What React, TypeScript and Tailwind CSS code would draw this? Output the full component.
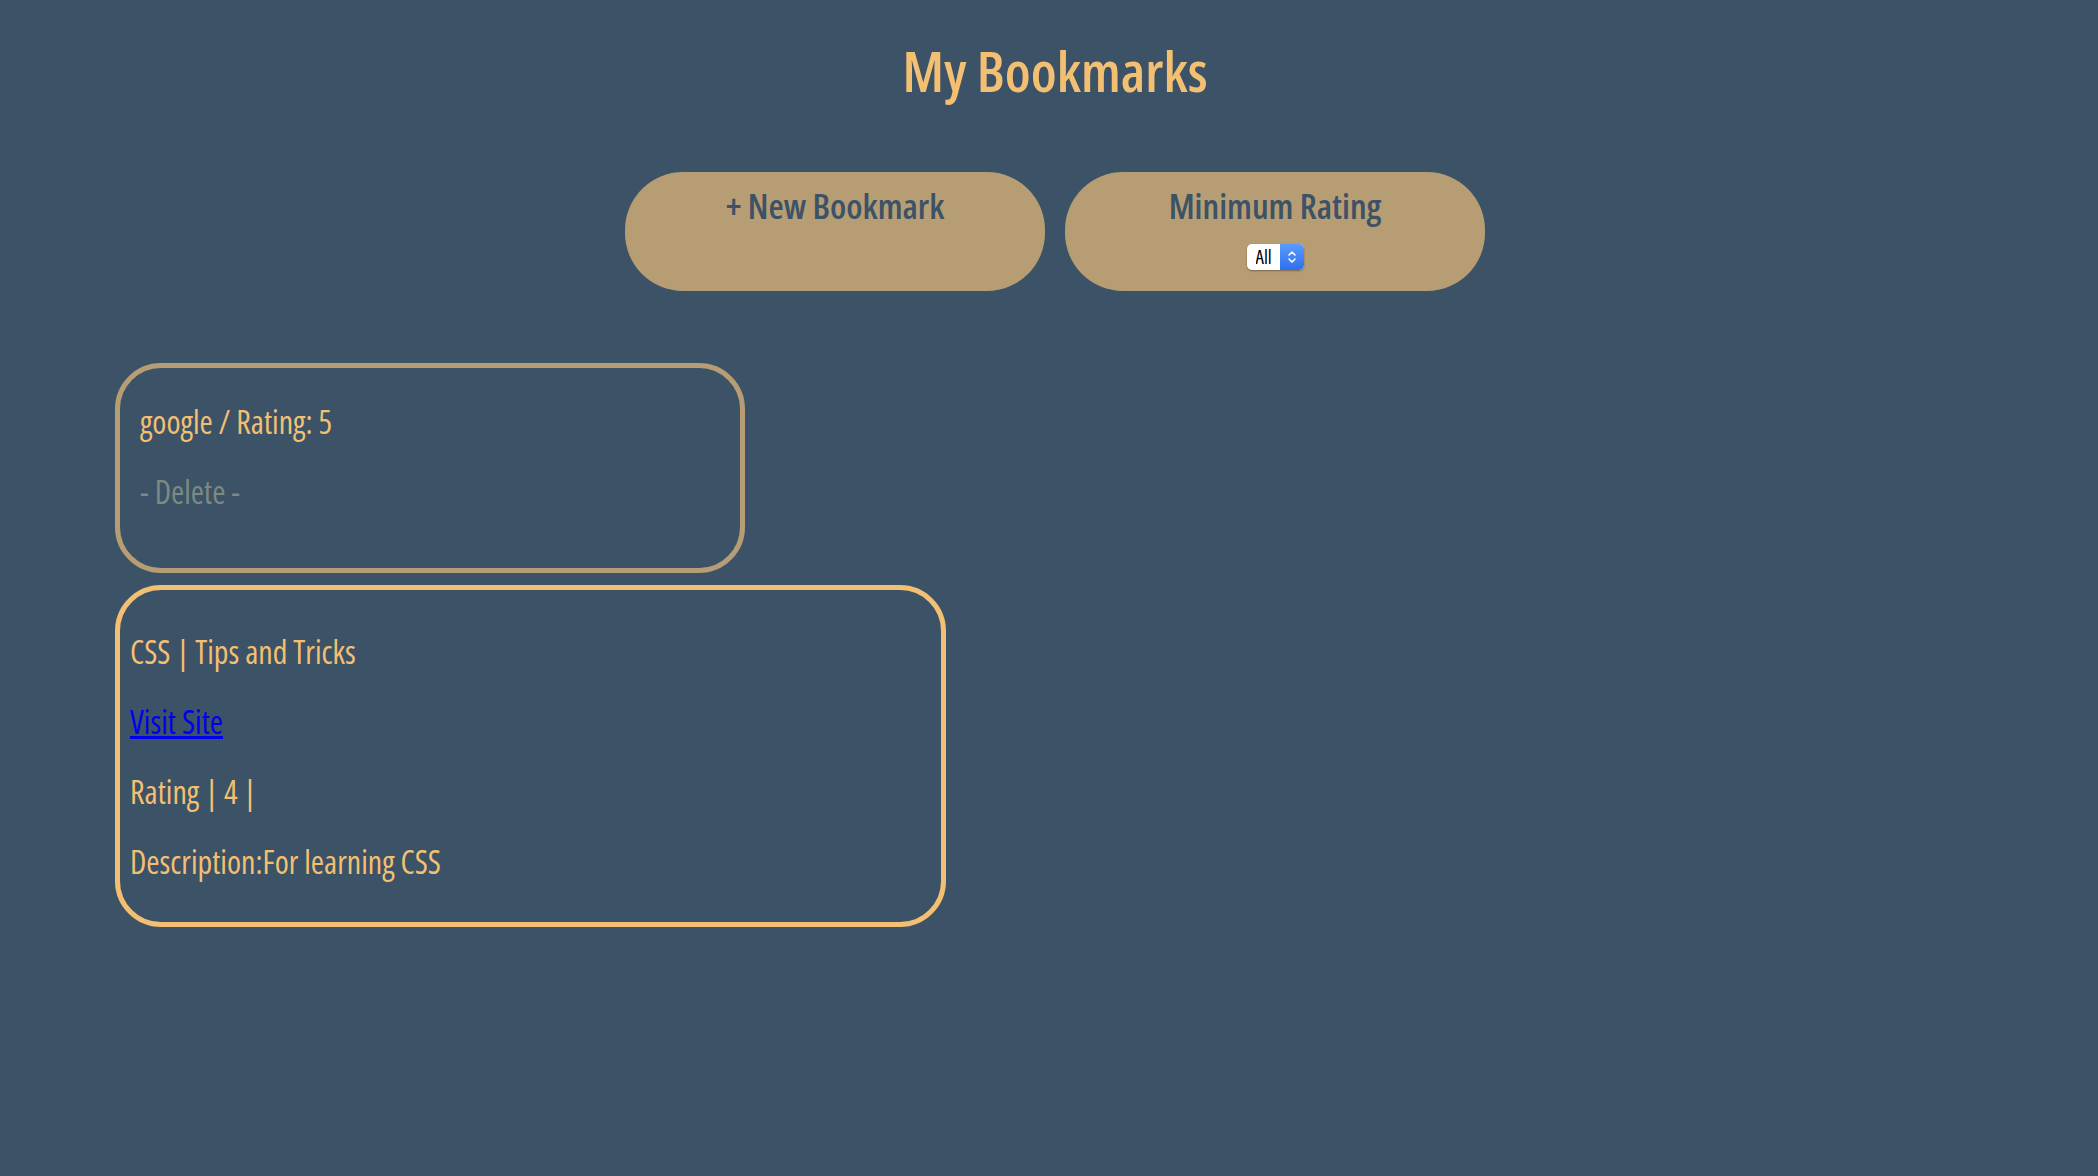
import { useState } from 'react';

const FONT = { fontFamily: '"Open Sans", "Liberation Sans", sans-serif' };

export default function App() {
  const [rating, setRating] = useState('All');

  return (
    <div className="min-h-screen w-full bg-[#3c5266] pb-20 font-stretch-condensed" style={FONT}>
      {/* Header */}
      <header className="flex flex-col items-center pl-3 pt-[42px]">
        <h1 className="text-[56px] font-semibold leading-none text-[#f3bf72]">My Bookmarks</h1>

        <div className="mt-[74px] flex gap-5">
          <button className="flex h-[119px] w-[420px] flex-col items-center rounded-[58px] bg-[#b69d74] pt-[16px] text-[35px] font-semibold leading-none text-[#3c5266]">
            + New Bookmark
          </button>
          <div className="flex h-[119px] w-[420px] flex-col items-center rounded-[58px] bg-[#b69d74] pt-[16px] text-[#3c5266]">
            <span className="text-[35px] font-semibold leading-none">Minimum Rating</span>
            <div className="relative mt-[21px] flex h-[26px] w-[57px] overflow-hidden rounded-[5px] shadow-[0_1px_2px_rgba(0,0,0,0.35)]">
              <select
                value={rating}
                onChange={(e) => setRating(e.target.value)}
                className="h-full w-full appearance-none bg-white pl-[9px] text-[19px] leading-none text-black outline-none font-stretch-condensed"
              >
                <option>All</option>
                <option>1</option>
                <option>2</option>
                <option>3</option>
                <option>4</option>
                <option>5</option>
              </select>
              <span className="pointer-events-none absolute right-0 top-0 flex h-full w-[24px] items-center justify-center bg-gradient-to-b from-[#5a9bff] to-[#2f6fee]">
                <svg width="10" height="16" viewBox="0 0 10 16" fill="none" stroke="white" strokeWidth="1.6" strokeLinecap="round" strokeLinejoin="round">
                  <path d="M2 6 L5 3 L8 6" />
                  <path d="M2 10 L5 13 L8 10" />
                </svg>
              </span>
            </div>
          </div>
        </div>
      </header>

      {/* Bookmarks */}
      <main className="ml-[115px] mt-[72px] flex flex-col items-start gap-3">
        <div className="flex h-[210px] w-[630px] flex-col rounded-[46px] border-[5px] border-[#b69d74] pl-5 pt-[38px]">
          <p className="text-[32px] font-medium leading-none text-[#f3bf72]">google / Rating: 5</p>
          <p className="mt-[38px] text-[32px] font-medium leading-none text-[#7b8a82]">- Delete -</p>
        </div>

        <div className="flex h-[342px] w-[831px] flex-col rounded-[46px] border-[5px] border-[#f3bf72] pl-[10px] pt-[46px] text-[32px] font-medium leading-none text-[#f3bf72]">
          <p>CSS | Tips and Tricks</p>
          <a href="#" className="mt-[38px] self-start text-[#0000ee] underline">Visit Site</a>
          <p className="mt-[38px]">Rating | 4 |</p>
          <p className="mt-[38px]">Description:For learning CSS</p>
        </div>
      </main>
    </div>
  );
}
